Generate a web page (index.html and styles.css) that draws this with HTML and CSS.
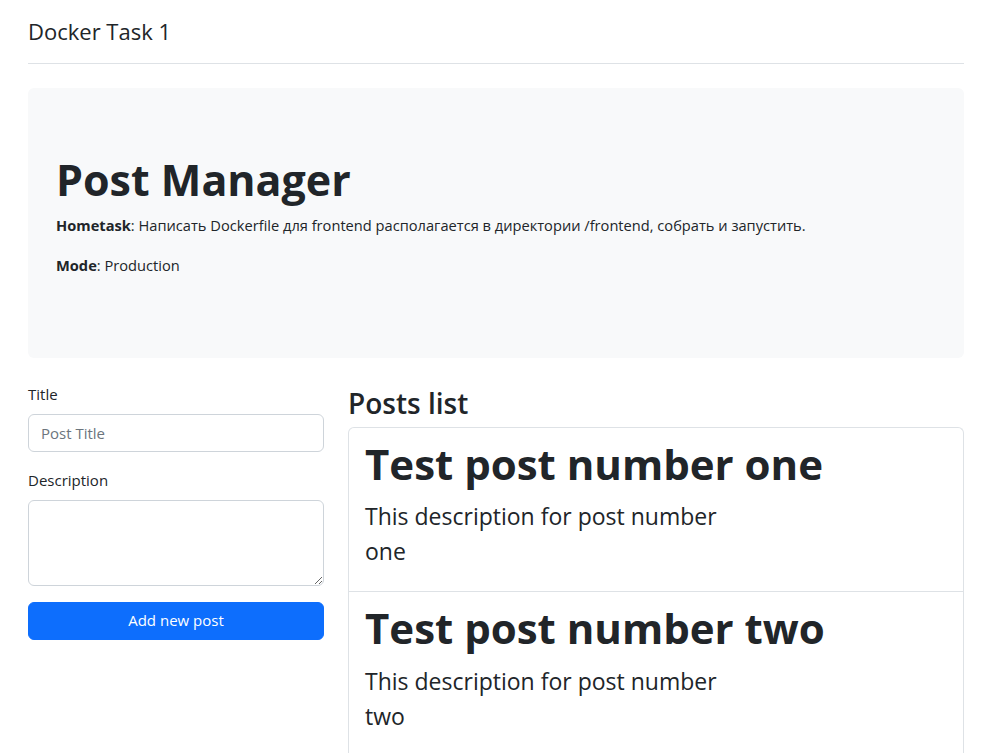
FILE: index.html
```html
<!DOCTYPE html>
<html lang="ru">
<head>
<meta charset="utf-8">
<title>Docker Task 1</title>
<link rel="stylesheet" href="styles.css">
</head>
<body>
<div class="container">
  <header class="header">
    <span class="brand">Docker Task 1</span>
  </header>

  <section class="jumbo">
    <h1 class="jumbo-title">Post Manager</h1>
    <p><b>Hometask</b>: Написать Dockerfile для frontend располагается в директории /frontend, собрать и запустить.</p>
    <p><b>Mode</b>: Production</p>
  </section>

  <div class="row">
    <form class="col-form">
      <div class="field">
        <label class="label" for="title">Title</label>
        <input class="control" id="title" type="text" placeholder="Post Title">
      </div>
      <div class="field">
        <label class="label" for="desc">Description</label>
        <textarea class="control area" id="desc" rows="3"></textarea>
      </div>
      <button class="btn" type="button">Add new post</button>
    </form>

    <div class="col-list">
      <h2 class="list-title">Posts list</h2>
      <ul class="list">
        <li class="item">
          <h3 class="item-title">Test post number one</h3>
          <p class="item-desc">This description for post number one</p>
        </li>
        <li class="item">
          <h3 class="item-title">Test post number two</h3>
          <p class="item-desc">This description for post number two</p>
        </li>
      </ul>
    </div>
  </div>
</div>
</body>
</html>
```

FILE: styles.css
```css
* { box-sizing: border-box; }
html, body { margin: 0; padding: 0; }
body {
  font-family: "Open Sans", "Noto Sans", sans-serif;
  font-size: 16px;
  line-height: 1.5;
  color: #212529;
  background: #fff;
}
.container {
  padding: 0 26px 0 28px;
}
.header {
  padding: 14px 0 15px;
  border-bottom: 1px solid #dee2e6;
  margin-bottom: 24px;
}
.brand {
  font-size: 22px;
  line-height: 34px;
  display: block;
}
.jumbo {
  background: #f8f9fa;
  border-radius: 6px;
  padding: 66px 28px 81px;
  margin-bottom: 24px;
}
.jumbo-title {
  font-size: 43px;
  font-weight: 700;
  line-height: 1.2;
  margin: 0 0 7px;
}
.jumbo p {
  margin: 0 0 16px;
  font-size: 14.65px;
  line-height: 24px;
}
.jumbo p:last-child { margin-bottom: 0; }
.jumbo b { font-weight: 700; }
.row {
  display: flex;
  gap: 24px;
  align-items: flex-start;
}
.col-form {
  width: 296px;
  flex: none;
}
.col-list {
  flex: 1;
  min-width: 0;
}
.field { margin-bottom: 16px; }
.label {
  display: block;
  font-size: 15px;
  line-height: 24px;
  margin-bottom: 8px;
}
.control {
  display: block;
  width: 100%;
  height: 38px;
  padding: 6px 12px;
  font: inherit;
  font-size: 15px;
  color: #212529;
  border: 1px solid #ced4da;
  border-radius: 6px;
  background: #fff;
}
.control::placeholder { color: #6c757d; }
.area {
  height: 86px;
  resize: vertical;
}
.btn {
  display: block;
  width: 100%;
  height: 38px;
  font: inherit;
  font-size: 15px;
  color: #fff;
  background: #0d6efd;
  border: 1px solid #0d6efd;
  border-radius: 6px;
}
.list-title {
  font-size: 28px;
  font-weight: 600;
  line-height: 36px;
  margin: 3px 0 6px;
}
.list {
  list-style: none;
  margin: 0;
  padding: 0;
  border: 1px solid #dee2e6;
  border-radius: 6px 6px 0 0;
  border-bottom: none;
}
.item {
  padding: 10px 16px 6px;
  border-bottom: 1px solid #dee2e6;
}
.item-title {
  font-size: 42px;
  font-weight: 700;
  line-height: 1.25;
  margin: 0 0 9px;
}
.item-desc {
  font-size: 23px;
  line-height: 35px;
  max-width: 370px;
  margin: 0 0 16px;
}
```
